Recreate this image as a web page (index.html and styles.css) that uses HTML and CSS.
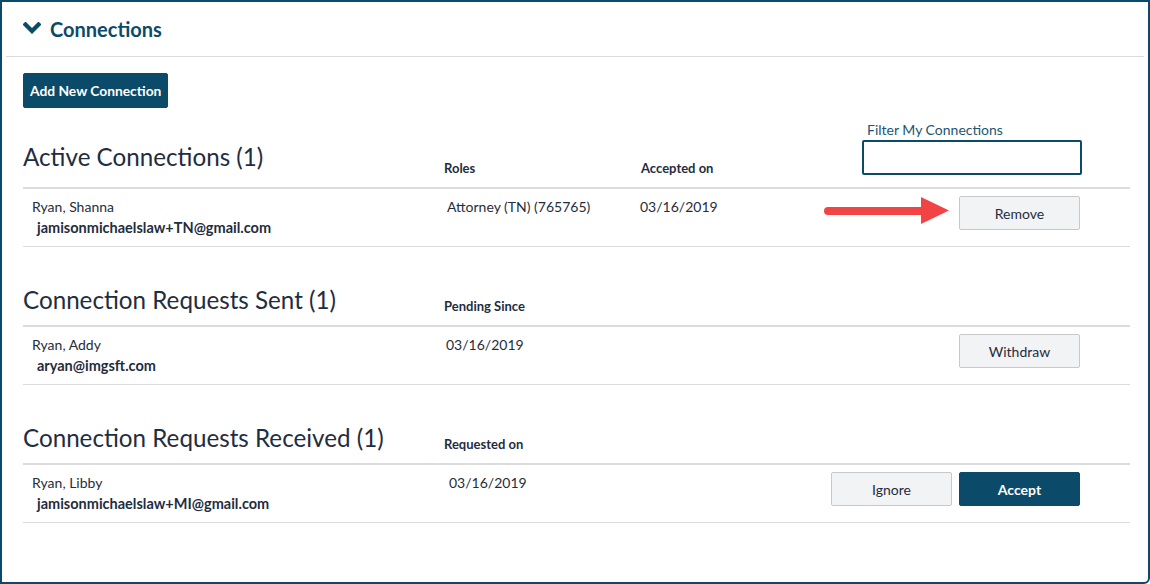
FILE: index.html
```html
<!DOCTYPE html>
<html>
<head>
    <meta charset="utf-8">
    <title>Connections</title>
    <link rel="stylesheet" href="styles.css">
</head>
<body>
    <div class="panel">
        <div class="panel-heading">
            <svg class="chevron" width="18" height="13" viewBox="0 0 18 13">
                <polyline points="2.5,2.5 9,9 15.5,2.5" fill="none" stroke="#0b4b69" stroke-width="4.2" stroke-linecap="square"/>
            </svg>
            <span>Connections</span>
        </div>

        <div class="panel-body">
            <button class="btn btn-primary btn-add">Add New Connection</button>

            <section class="conn-section first">
                <div class="conn-head">
                    <h2 class="raised">Active Connections (1)</h2>
                    <div class="col-label">Roles</div>
                    <div class="col-label">Accepted on</div>
                    <div class="filter">
                        <label for="filter">Filter My Connections</label>
                        <input type="text" id="filter">
                    </div>
                </div>
                <div class="conn-row">
                    <div class="person">
                        <div class="name">Ryan, Shanna</div>
                        <div class="email">jamisonmichaelslaw+TN@gmail.com</div>
                    </div>
                    <div class="cell">Attorney (TN) (765765)</div>
                    <div class="cell date">03/16/2019</div>
                    <div class="actions">
                        <svg class="arrow" width="126" height="30" viewBox="0 0 126 30">
                            <line x1="4" y1="15" x2="100" y2="15" stroke="#f24444" stroke-width="8" stroke-linecap="round"/>
                            <polygon points="97,1 125,14.5 97,28" fill="#f24444"/>
                        </svg>
                        <button class="btn btn-default">Remove</button>
                    </div>
                </div>
            </section>

            <section class="conn-section">
                <div class="conn-head">
                    <h2>Connection Requests Sent (1)</h2>
                    <div class="col-label">Pending Since</div>
                    <div></div>
                    <div></div>
                </div>
                <div class="conn-row">
                    <div class="person">
                        <div class="name">Ryan, Addy</div>
                        <div class="email">aryan@imgsft.com</div>
                    </div>
                    <div class="cell near">03/16/2019</div>
                    <div></div>
                    <div class="actions">
                        <button class="btn btn-default">Withdraw</button>
                    </div>
                </div>
            </section>

            <section class="conn-section">
                <div class="conn-head">
                    <h2>Connection Requests Received (1)</h2>
                    <div class="col-label">Requested on</div>
                    <div></div>
                    <div></div>
                </div>
                <div class="conn-row">
                    <div class="person">
                        <div class="name">Ryan, Libby</div>
                        <div class="email">jamisonmichaelslaw+MI@gmail.com</div>
                    </div>
                    <div class="cell shift">03/16/2019</div>
                    <div></div>
                    <div class="actions">
                        <button class="btn btn-default">Ignore</button>
                        <button class="btn btn-primary">Accept</button>
                    </div>
                </div>
            </section>
        </div>
    </div>
</body>
</html>
```

FILE: styles.css
```css
* {
    box-sizing: border-box;
}
body {
    margin: 0;
    font-family: Lato, "Open Sans", sans-serif;
    color: #1f2d3d;
    background: white;
}
.panel {
    width: 1150px;
    height: 584px;
    border: 2px solid #0b4b69;
    border-radius: 0 0 6px 0;
    background: white;
}
.panel-heading {
    display: flex;
    align-items: center;
    gap: 9px;
    height: 55px;
    margin: 0 4px;
    padding: 0 17px;
    border-bottom: 1px solid #dcdcdc;
    color: #0b4b69;
    font-size: 20px;
    font-weight: 700;
}
.chevron {
    margin-top: -1px;
}
.panel-body {
    padding: 16px 18px 40px 21px;
}
.btn {
    font-family: inherit;
    font-size: 14px;
    height: 34px;
    border-radius: 2px;
    cursor: pointer;
}
.btn-primary {
    background: #0b4b69;
    color: white;
    border: 1px solid #0b4b69;
    font-weight: 700;
}
.btn-default {
    background: #f2f3f5;
    color: #1f2d3d;
    border: 1px solid #c8c8c8;
    width: 121px;
}
.actions .btn-primary {
    width: 121px;
}
.btn-add {
    padding: 0 6px;
    font-size: 13.8px;
    height: 35px;
}
.conn-section {
    margin-top: 39px;
}
.conn-section.first {
    margin-top: 14px;
}
.conn-head,
.conn-row {
    display: grid;
    grid-template-columns: 421px 197px 180px 1fr;
}
.conn-head {
    align-items: end;
    padding-bottom: 11px;
    border-bottom: 2px solid #dcdcdc;
}
.conn-head h2 {
    margin: 0;
    font-size: 24.2px;
    font-weight: 400;
    line-height: 28px;
    color: #1f2d40;
}
.conn-head h2.raised {
    margin-bottom: 5px;
}
.col-label {
    font-size: 13px;
    font-weight: 700;
    line-height: 16px;
    color: #1f2d40;
}
.filter {
    justify-self: end;
    display: flex;
    flex-direction: column;
    gap: 2px;
    align-items: flex-start;
    margin-right: 48px;
}
.filter label {
    font-size: 14px;
    line-height: 16px;
    color: #1d5573;
    padding-left: 5px;
}
.filter input {
    width: 220px;
    height: 35px;
    border: 2px solid #0b4b69;
    border-radius: 2px;
    margin-bottom: 1px;
}
.conn-row {
    padding: 8px 0;
    border-bottom: 1px solid #dcdcdc;
    font-size: 14px;
}
.person {
    padding-left: 9px;
}
.name {
    line-height: 20px;
}
.email {
    line-height: 20px;
    margin-top: 1px;
    padding-left: 5px;
    font-weight: 700;
    font-size: 14.5px;
}
.cell {
    line-height: 20px;
    padding-left: 3px;
}
.cell.date {
    padding-left: 0;
    margin-left: -1px;
}
.cell.near {
    padding-left: 2px;
}
.cell.shift {
    padding-left: 5px;
}
.actions {
    display: flex;
    justify-content: flex-end;
    align-items: flex-start;
    gap: 7px;
    margin-top: -1px;
    padding-right: 50px;
}
.arrow {
    margin: 0 2px 0 0;
    flex-shrink: 0;
}
```
